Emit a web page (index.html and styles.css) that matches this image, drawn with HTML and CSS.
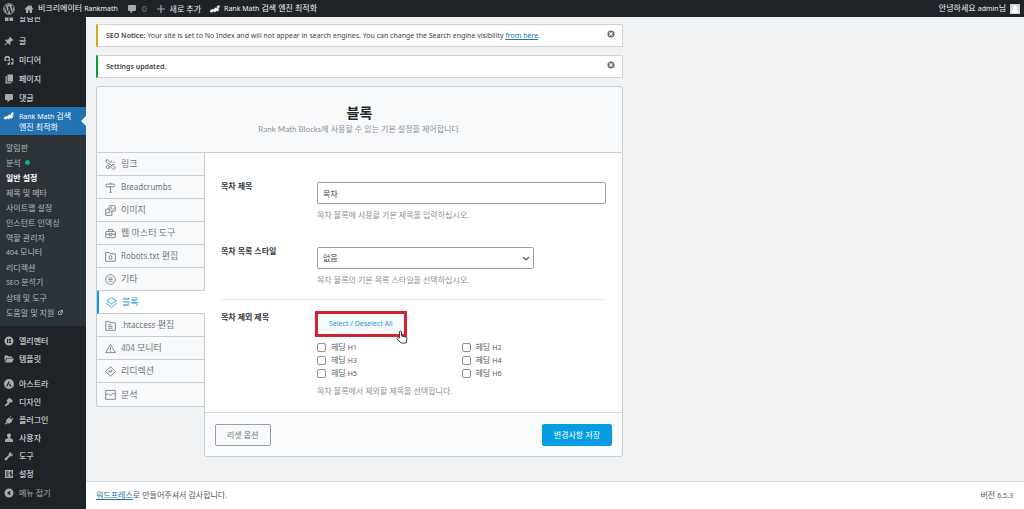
FILE: index.html
```html
<!DOCTYPE html>
<html lang="ko">
<head>
<meta charset="utf-8">
<meta name="viewport" content="width=device-width, initial-scale=1">
<title>블록 - Rank Math</title>
<link rel="stylesheet" href="styles.css">
</head>
<body>
<header class="adminbar">
  <a class="bar-item" href="#" aria-label="WordPress"><svg class="wp-logo" viewBox="0 0 20 20"><circle cx="10" cy="10" r="9" fill="none" stroke="currentColor" stroke-width="1.4"/><path fill="currentColor" d="M3 7l4 10.300A8 8 0 0 1 3 7zM4 5.200A8 8 0 0 1 15.300 4.100c-1.200.5-1.500 1.900-.6 3.200.9 1.400 1 2.300.5 4l-1.100 3.500-2.700-8 1-.2v-.8H7.200v.8l1.100.2 1.100 3-1.600 4.700L5.100 6.600l1-.2v-.8H3.800zM10.200 10.900l2.400 6.500a8 8 0 0 1-4.700.2zM17.200 6.500A8 8 0 0 1 14 16.800l2.500-7c.4-1.200.7-2.200.7-3.300z"/></svg></a>
  <a class="bar-item" href="#"><svg class="icon" viewBox="0 0 20 20"><path fill="currentColor" d="M10 2L1 10l1.500 1.500L4 10.200V18h4.500v-5h3v5H16v-7.800l1.500 1.300L19 10l-3-2.700V3h-2.500v2z"/></svg><span>비크리에이터 <span class="latin">Rankmath</span></span></a>
  <a class="bar-item" href="#"><svg class="icon" viewBox="0 0 20 20"><path fill="currentColor" d="M4 2h12a2 2 0 0 1 2 2v8a2 2 0 0 1-2 2h-4l-5 5v-5H4a2 2 0 0 1-2-2V4a2 2 0 0 1 2-2z"/></svg><span class="count">0</span></a>
  <a class="bar-item" href="#"><svg class="icon" viewBox="0 0 20 20"><path fill="currentColor" d="M8.800 2h2.400v6.800H18v2.400h-6.800V18H8.800v-6.800H2V8.800h6.800z"/></svg>새로 추가</a>
  <a class="bar-item" href="#"><svg class="icon rank" viewBox="0 0 20 20"><path fill="currentColor" d="M0 13l4-3 3 1 3-4 3 1 1-1-1-2 6-3v6l-2-1-1 2h3l-3 6-4-1-2 3-3-2-3 2-4-1z"/></svg><span><span class="latin">Rank Math</span> 검색 엔진 최적화</span></a>
  <a class="bar-item account" href="#"><span>안녕하세요 <span class="latin">admin</span>님</span><svg class="avatar" viewBox="0 0 10 10"><path fill="#d0d2d4" d="M0 0h10v10H0z"/><path fill="#fff" d="M5 1.500a2 2 0 0 1 1.200 3.700C8 5.800 8.500 7 8.500 9h-7c0-2 .5-3.200 2.300-3.800A2 2 0 0 1 5 1.500z"/></svg></a>
</header>
<div class="shell">
  <nav class="sidebar" aria-label="관리자 메뉴">
    <ul class="menu menu-top">
      <li><a href="#"><svg class="icon" viewBox="0 0 20 20"><path fill="currentColor" d="M2 3h16v4H2zm0 6h7v7H2zm9 0h7v7h-7z"/></svg>알림판</a></li>
    </ul>
    <ul class="menu menu-content">
      <li><a href="#"><svg class="icon" viewBox="0 0 20 20"><path fill="currentColor" d="M11.500 1l7.500 7.500-2 1-1-.5-3.500 3.500.5 4-1.500 1.500-4-4L2 19l-1-1 5-5.500-4-4L3.500 7l4 .5L11 4l-.5-1z"/></svg>글</a></li>
      <li><a href="#"><svg class="icon" viewBox="0 0 20 20"><path fill="currentColor" fill-rule="evenodd" d="M3 2h7l1 2h1v8H1V4h1zM6.500 5a3 3 0 1 0 0 6 3 3 0 0 0 0-6zM14 7h5v10a2.500 2.500 0 1 1-2-2.400V10h-3zM10 13h2v5a2.500 2.500 0 1 1-2-2.500z"/></svg>미디어</a></li>
      <li><a href="#"><svg class="icon" viewBox="0 0 20 20"><path fill="currentColor" d="M7 1h11v14H7zM3 4h2.500v12.500H15V19H3z"/></svg>페이지</a></li>
      <li><a href="#"><svg class="icon" viewBox="0 0 20 20"><path fill="currentColor" d="M4 2h12a2 2 0 0 1 2 2v8a2 2 0 0 1-2 2h-4l-5 5v-5H4a2 2 0 0 1-2-2V4a2 2 0 0 1 2-2z"/></svg>댓글</a></li>
    </ul>
    <a class="current" href="#"><svg class="icon rank" viewBox="0 0 20 20"><path fill="currentColor" d="M0 13l4-3 3 1 3-4 3 1 1-1-1-2 6-3v6l-2-1-1 2h3l-3 6-4-1-2 3-3-2-3 2-4-1z"/></svg><span><span class="latin">Rank Math</span> 검색<br>엔진 최적화</span></a>
    <ul class="submenu">
      <li><a href="#">알림판</a></li>
      <li><a href="#">분석<span class="dot"></span></a></li>
      <li><a class="selected" href="#">일반 설정</a></li>
      <li><a href="#">제목 및 메타</a></li>
      <li><a href="#">사이트맵 설정</a></li>
      <li><a href="#">인스턴트 인덱싱</a></li>
      <li><a href="#">역할 관리자</a></li>
      <li><a href="#"><span><span class="latin">404</span> 모니터</span></a></li>
      <li><a href="#">리디렉션</a></li>
      <li><a href="#"><span><span class="latin">SEO</span> 분석기</span></a></li>
      <li><a href="#">상태 및 도구</a></li>
      <li><a href="#">도움말 및 지원<svg class="external" viewBox="0 0 10 10" fill="none" stroke="currentColor" stroke-width="1.500"><path d="M4 3H1v6h6V6M4 1h5v5M9 1L4 6"/></svg></a></li>
    </ul>
    <ul class="menu menu-builder">
      <li><a href="#"><svg class="icon" viewBox="0 0 20 20"><path fill="currentColor" fill-rule="evenodd" d="M10 1a9 9 0 1 1 0 18 9 9 0 0 1 0-18zM6 6v8h2V6zm3.500 0v2H14V6zm0 3v2H14V9zm0 3v2H14v-2z"/></svg>엘리멘터</a></li>
      <li><a href="#"><svg class="icon" viewBox="0 0 20 20"><path fill="currentColor" d="M1 3h6l2 2h7v3H5l-4 7zM6 9h14l-4 8H2z"/></svg>템플릿</a></li>
    </ul>
    <ul class="menu menu-site">
      <li><a href="#"><svg class="icon" viewBox="0 0 20 20"><path fill="currentColor" fill-rule="evenodd" d="M10 0a10 10 0 1 1 0 20 10 10 0 0 1 0-20zM9.500 4L4 15h2.500l4.500-8zM12 9l-2.500 4h2l1 2H15z"/></svg>아스트라</a></li>
      <li><a href="#"><svg class="icon" viewBox="0 0 20 20"><path fill="currentColor" d="M10 2l3 1 5 5-4 4-2-2-2 2 1 2-2 1-6 4-2-2 5-5 1-2-2-3 3-3z"/></svg>디자인</a></li>
      <li><a href="#"><svg class="icon" viewBox="0 0 20 20"><path fill="currentColor" d="M13 1l1.500 1.500-3 3 3 3 3-3L19 7l-3 3 1 1-3 4c-2 2-5 3-7 1l-3 3-3-1 4-4c-1-2-1-4 1-6l4-3 1 1z"/></svg>플러그인</a></li>
      <li><a href="#"><svg class="icon" viewBox="0 0 20 20"><path fill="currentColor" d="M10 1a4 4 0 0 1 2.500 7.200L12 10l6 3v5H2v-5l6-3-.5-1.800A4 4 0 0 1 10 1z"/></svg>사용자</a></li>
      <li><a href="#"><svg class="icon" viewBox="0 0 20 20"><path fill="currentColor" d="M16.500 9.500c-1.300 1.300-3.200 1.600-4.700 1L5 18.500C3.500 20 0 17 1.500 15l8-6.800c-.6-1.600-.3-3.500 1-4.800C11.800 2 13.700 1.500 15.300 2L13 4.500 15.500 7 18 4.700c.5 1.600-.2 3.500-1.500 4.800z"/></svg>도구</a></li>
      <li><a href="#"><svg class="icon" viewBox="0 0 20 20"><path fill="currentColor" fill-rule="evenodd" d="M2 2h16v16H2zM4 5v2h5V5zm0 4v2h5V9zm0 4v2h5v-2zM12 4v3h-1v3h1v6h1v-6h1V7h-1V4zm3 0v6h-1v3h1v3h1v-3h1v-3h-1V4z"/></svg>설정</a></li>
    </ul>
    <button class="collapse" type="button"><svg class="icon" viewBox="0 0 20 20"><path fill="currentColor" fill-rule="evenodd" d="M10 1a9 9 0 1 1 0 18 9 9 0 0 1 0-18zM12.500 5L6 10l6.500 5z"/></svg>메뉴 접기</button>
  </nav>
  <div class="page">
    <main class="content">
      <div class="notice notice-warning">
        <p class="latin"><strong>SEO Notice:</strong> Your site is set to No Index and will not appear in search engines. You can change the Search engine visibility <a href="#">from here</a>.</p>
        <button class="dismiss" type="button" aria-label="닫기"><svg viewBox="0 0 10 10"><circle cx="5" cy="5" r="4.500" fill="#6a6e72"/><path d="M3 3l4 4M7 3L3 7" stroke="#fff" stroke-width="1.500"/></svg></button>
      </div>
      <div class="notice notice-success">
        <p class="latin"><strong>Settings updated.</strong></p>
        <button class="dismiss" type="button" aria-label="닫기"><svg viewBox="0 0 10 10"><circle cx="5" cy="5" r="4.500" fill="#6a6e72"/><path d="M3 3l4 4M7 3L3 7" stroke="#fff" stroke-width="1.500"/></svg></button>
      </div>
      <header class="panel-header">
        <h1>블록</h1>
        <p>Rank Math Blocks에 사용할 수 있는 기본 설정을 제어합니다.</p>
      </header>
      <div class="panel">
        <nav class="tabs" aria-label="설정">
          <a href="#"><svg viewBox="0 0 16 16"><rect x="1" y="2" width="7" height="4" rx="2" transform="rotate(45 4.500 4)"/><rect x="8" y="10" width="7" height="4" rx="2" transform="rotate(45 11.500 12)"/><circle cx="4" cy="11.500" r="2.300"/><path d="M6 7l4 3M9 5l1-3M11 6l3-2M11 8h3M6 14l1-2"/></svg>링크</a>
          <a href="#"><svg viewBox="0 0 16 16"><path d="M2 3h11l2 2-2 2H2L1 5zM8 1v2M8 7v8M6 15h4"/></svg><span class="latin">Breadcrumbs</span></a>
          <a href="#"><svg viewBox="0 0 16 16"><rect x="6" y="1" width="9" height="8" rx="1"/><path d="M6 6H1v9h9V9M1 13l3-3 2 2 2-2M7 7l2-2 2 2 3-3"/><circle cx="9" cy="3.500" r=".5"/></svg>이미지</a>
          <a href="#"><svg viewBox="0 0 16 16"><rect x="1" y="5" width="14" height="9" rx="1"/><path d="M5 5V2h6v3M1 9h5M10 9h5M6 8h4v3H6z"/></svg>웹 마스터 도구</a>
          <a href="#"><svg viewBox="0 0 16 16"><path d="M1 2h5l1 2h8v11H1z"/><ellipse cx="8" cy="9.500" rx="2" ry="3"/></svg><span><span class="latin">Robots.txt</span> 편집</span></a>
          <a href="#"><svg viewBox="0 0 16 16"><circle cx="8" cy="8" r="7"/><path d="M5 5.500h6M5 8h6M5 10.500h6"/></svg>기타</a>
          <a class="active" href="#" aria-current="page"><svg viewBox="0 0 16 16"><path d="M8 1l7 4.500L8 10 1 5.500zM3 8l-2 2 7 5 7-5-2-2"/></svg>블록</a>
          <a href="#"><svg viewBox="0 0 16 16"><path d="M1 2h5l1 2h8v11H1zM5 7h4M5 9.500h6M5 12h6"/></svg><span><span class="latin">.htaccess</span> 편집</span></a>
          <a href="#"><svg viewBox="0 0 16 16"><path d="M8 2l7 12H1zM8 6v4M8 11.500V13"/></svg><span><span class="latin">404</span> 모니터</span></a>
          <a href="#"><svg viewBox="0 0 16 16"><path d="M8 1l7 7-7 7-7-7zM5.500 10V7.500H10M8.500 5.500l2 2-2 2"/></svg>리디렉션</a>
          <a href="#"><svg viewBox="0 0 16 16"><path d="M1 2h14v13H1zM1 8h2l2-1 3 3 3-4 2 1h2"/></svg>분석</a>
        </nav>
        <form class="settings">
          <div class="fields">
            <div class="field">
              <label class="field-label" for="toc-title">목차 제목</label>
              <div class="field-body">
                <input class="text-input" id="toc-title" type="text" value="목차">
                <p class="hint">목차 블록에 사용할 기본 제목을 입력하십시오.</p>
              </div>
            </div>
            <div class="field">
              <label class="field-label" for="toc-style">목차 목록 스타일</label>
              <div class="field-body">
                <div class="select-wrap">
                  <select id="toc-style"><option>없음</option></select>
                  <svg class="chevron" viewBox="0 0 8 8"><path d="M1 3l3 3 3-3" fill="none" stroke="#50575e" stroke-width="1.200"/></svg>
                </div>
                <p class="hint">목차 블록의 기본 목록 스타일을 선택하십시오.</p>
              </div>
            </div>
            <div class="field field-split" role="group" aria-labelledby="toc-exclude">
              <span class="field-label" id="toc-exclude">목차 제외 제목</span>
              <div class="field-body">
                <div class="highlight">
                  <button class="toggle-all latin" type="button">Select / Deselect All</button>
                  <svg class="pointer" viewBox="0 0 12 14"><path d="M3.500 8V2a1 1 0 0 1 2 0v4l4.500 1a1.500 1.500 0 0 1 1 1.500L10 13H5L1 9a1 1 0 0 1 1.500-1.200z" fill="#fff" stroke="#444" stroke-width="1"/></svg>
                </div>
                <div class="checks">
                  <label><input type="checkbox"><span>헤딩 <span class="latin">H1</span></span></label>
                  <label><input type="checkbox"><span>헤딩 <span class="latin">H2</span></span></label>
                  <label><input type="checkbox"><span>헤딩 <span class="latin">H3</span></span></label>
                  <label><input type="checkbox"><span>헤딩 <span class="latin">H4</span></span></label>
                  <label><input type="checkbox"><span>헤딩 <span class="latin">H5</span></span></label>
                  <label><input type="checkbox"><span>헤딩 <span class="latin">H6</span></span></label>
                </div>
                <p class="hint">목차 블록에서 제외할 제목을 선택합니다.</p>
              </div>
            </div>
          </div>
          <div class="actions">
            <button class="btn btn-reset" type="button">리셋 옵션</button>
            <button class="btn btn-save" type="button">변경사항 저장</button>
          </div>
        </form>
      </div>
    </main>
    <footer class="footer">
      <p><a href="#">워드프레스</a>로 만들어주셔서 감사합니다.</p>
      <p>버전 <span class="latin">6.5.3</span></p>
    </footer>
  </div>
</div>
</body>
</html>
```
FILE: styles.css
```css
* { box-sizing: border-box; }

body {
  margin: 0;
  min-height: 100vh;
  display: flex;
  flex-direction: column;
  background: #f0f2f4;
  color: #50575e;
  font: 8px/12px Lato, "Noto Sans CJK KR", sans-serif;
}

p, h1, ul { margin: 0; padding: 0; }
ul { list-style: none; }
a { color: inherit; text-decoration: none; }
button, input, select { font: inherit; color: inherit; margin: 0; }
svg { display: block; flex: none; }

.icon { width: 10px; height: 10px; color: #a7aaad; }
.latin { font-family: "Noto Sans", sans-serif; font-size: 7px; }

/* Admin bar */
.adminbar {
  position: relative;
  z-index: 1;
  display: flex;
  height: 17px;
  padding: 0 4px 0 3px;
  gap: 9px;
  background: #1d2327;
  color: #f0f0f1;
}
.bar-item { display: flex; align-items: center; gap: 4px; white-space: nowrap; }
.wp-logo { width: 12px; height: 12px; color: #a7aaad; }
.count { color: #8c9196; margin-left: 1px; }
.rank { color: #f0f0f1; }
.account { margin-left: auto; }
.avatar { width: 10px; height: 10px; }

.shell { flex: 1; display: flex; }

/* Sidebar */
.sidebar {
  flex: none;
  width: 86px;
  overflow: hidden;
  background: #1d2327;
  color: #f0f0f1;
}
.menu a, .collapse {
  display: flex;
  align-items: center;
  gap: 5px;
  height: 18px;
  padding: 0 4px;
}
.menu-top { margin-top: -8px; }
.menu-content { margin-top: 4px; }
.menu-content a { height: 19px; }
.current {
  position: relative;
  display: flex;
  gap: 5px;
  padding: 4px 4px 3px;
  line-height: 10px;
  background: #2271b1;
  color: #fff;
}
.current .icon { color: #fff; }
.current::after {
  content: "";
  position: absolute;
  right: 0;
  top: 9px;
  border: 5px solid transparent;
  border-left: 0;
  border-right-color: #f0f2f4;
}
.submenu {
  padding: 5px 6px 6px;
  background: #2c3338;
  color: #b4b9be;
}
.submenu a { display: flex; align-items: center; gap: 4px; height: 15px; white-space: nowrap; }
.submenu .selected { color: #fff; font-weight: 700; }
.dot { width: 5px; height: 5px; border-radius: 50%; background: #10ac84; }
.external { width: 5px; height: 5px; }
.menu-builder { margin-top: 6px; }
.menu-site { margin-top: 7px; }
.collapse { width: 100%; margin-top: 1px; border: 0; background: none; color: #a7aaad; }

/* Content */
.page { flex: 1; min-width: 0; display: flex; flex-direction: column; }
.content { flex: 1; width: 100%; max-width: 547px; padding: 7px 10px 24px; }

.notice {
  display: flex;
  justify-content: space-between;
  align-items: flex-start;
  margin-bottom: 8px;
  padding: 5px 7px 4px 8px;
  border: 1px solid #d0d3d6;
  border-left-width: 2px;
  background: #fff;
  color: #3c434a;
}
.notice p { line-height: 12px; }
.notice strong { font-weight: 600; }
.notice a, .footer a { color: #2271b1; text-decoration: underline; }
.notice-warning { border-left-color: #dba617; }
.notice-success { border-left-color: #00a32a; }
.dismiss { padding: 0; border: 0; background: none; }
.dismiss svg { width: 8px; height: 8px; }

.panel-header {
  padding: 17px 10px 16px;
  border: 1px solid #c8cdd1;
  border-radius: 3px 3px 0 0;
  background: #f8f9fb;
  text-align: center;
}
.panel-header h1 { font-size: 14px; line-height: 18px; color: #23282d; }
.panel-header p { line-height: 14px; color: #8c9298; }

.panel { display: flex; align-items: flex-start; }
.tabs {
  flex: none;
  position: relative;
  width: 109px;
  overflow: hidden;
  border: 1px solid #c8cdd1;
  border-top: 0;
  border-right: 0;
  border-radius: 0 0 0 3px;
  background: #f8f9fb;
  font-size: 9px;
  color: #6f767c;
}
.tabs .latin { font-size: 8px; }
.tabs a {
  display: flex;
  align-items: center;
  gap: 5px;
  height: 23px;
  padding-left: 8px;
  border-bottom: 1px solid #c8cdd1;
  border-right: 1px solid #c8cdd1;
}
.tabs a:last-child { border-bottom: 0; }
.tabs .active {
  padding-left: 7px;
  border-left: 2px solid #069de3;
  border-right-color: #fff;
  background: #fff;
  color: #2a9fd0;
}
.tabs svg { width: 11px; height: 11px; fill: none; stroke: currentColor; stroke-width: 1.2; }

.settings {
  flex: 1;
  min-width: 0;
  margin-left: -1px;
  border: 1px solid #c8cdd1;
  border-top: 0;
  border-radius: 0 0 3px 3px;
  background: #fff;
}
.fields { padding: 29px 16px 15px; }
.field { display: flex; margin-bottom: 26px; }
.field-label { flex: none; width: 96px; line-height: 9px; font-weight: 700; color: #32373c; }
.field-body { flex: 1; min-width: 0; }
.text-input, .select-wrap select {
  display: block;
  width: 100%;
  height: 22px;
  padding: 0 5px;
  border: 1px solid #9a9ea3;
  border-radius: 2px;
  background: #fff;
  color: #3c434a;
}
.select-wrap { position: relative; width: 75%; }
.select-wrap select { appearance: none; }
.chevron { position: absolute; right: 4px; top: 7px; width: 8px; height: 8px; pointer-events: none; }
.hint { margin-top: 5px; color: #8c9298; }
.field-split { margin: -13px 0 0; padding-top: 11px; border-top: 1px solid #e4e7e9; }
.field-split .field-label { line-height: 12px; }

.highlight {
  position: relative;
  width: max-content;
  margin: 0 0 4px -2px;
  border: 3px solid #d32232;
}
.toggle-all {
  display: block;
  height: 20px;
  padding: 0 11px;
  border: 0;
  background: #f8f9fb;
  color: #2a9fd0;
}
.pointer { position: absolute; right: -4px; bottom: -10px; width: 12px; height: 14px; }
.checks { display: grid; grid-template-columns: 1fr 1fr; }
.checks label { display: flex; align-items: center; gap: 5px; height: 13px; color: #50575e; }
.checks input {
  appearance: none;
  width: 9px;
  height: 9px;
  border: 1px solid #8c8f94;
  border-radius: 2px;
  background: #fff;
}

.actions {
  display: flex;
  justify-content: space-between;
  padding: 11px 10px 10px;
  border-top: 1px solid #d5d9dc;
  border-radius: 0 0 3px 3px;
  background: #fafbfc;
}
.btn { height: 22px; padding: 0 11px; border: 1px solid #9a9ea3; border-radius: 2px; }
.btn-reset { background: #f8f9fb; color: #6f767c; }
.btn-save { border-color: #069de3; background: #069de3; color: #fff; }

.footer {
  display: flex;
  justify-content: space-between;
  padding: 7px 11px 8px 10px;
  border-top: 1px solid #d5d9dc;
  background: #fff;
}
```
